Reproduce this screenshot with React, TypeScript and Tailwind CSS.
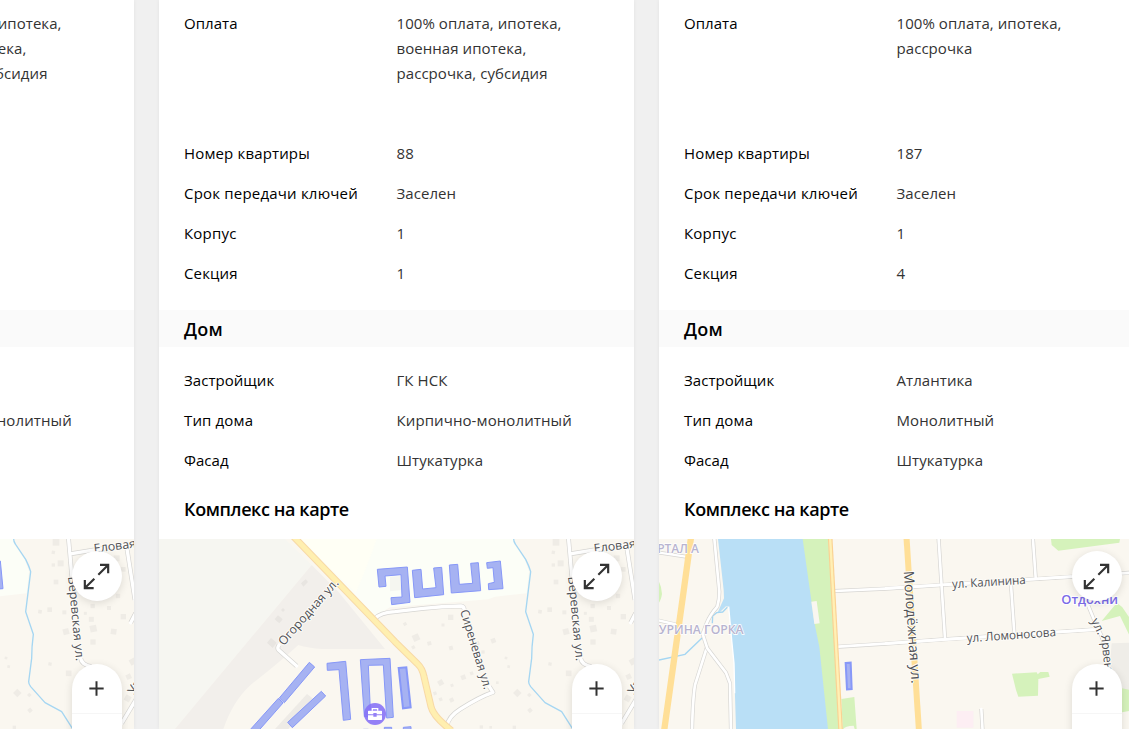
import type { ReactNode } from "react";

type Row = { label: string; value: string; labelClass?: string; valueClass?: string };

function Road({ d, w = 10 }: { d: string; w?: number }) {
  return (
    <g fill="none" strokeLinejoin="round">
      <path d={d} stroke="#d6d5d2" strokeWidth={w + 4} />
      <path d={d} stroke="#fff" strokeWidth={w} strokeLinecap="round" />
    </g>
  );
}

function Street({
  x,
  y,
  angle,
  length,
  children,
  size = 36.5,
}: {
  x: number;
  y: number;
  angle: number;
  length: number;
  children: string;
  size?: number;
}) {
  return (
    <text
      transform={`translate(${x} ${y}) rotate(${angle})`}
      textLength={length}
      lengthAdjust="spacingAndGlyphs"
      fontSize={size}
      fontWeight="500"
      fill="#505156"
      stroke="#fdfcf8"
      strokeWidth="6"
      strokeLinejoin="round"
      paintOrder="stroke"
    >
      {children}
    </text>
  );
}

const houses: [number, number, number, number][] = [
  [78, 323, 20, -25], [45, 282, 10, -30], [70, 352, 10, -30], [118, 340, 12, -15], [182, 262, 16, 0],
  [159, 285, 9, 0], [183, 354, 12, -15], [262, 340, 12, -15], [310, 332, 14, -20], [279, 366, 10, 0],
  [348, 384, 8, 10], [356, 410, 8, 10], [480, 402, 10, 10], [220, 442, 14, -20], [152, 458, 16, -30],
  [186, 466, 9, -20], [245, 430, 10, -20], [382, 489, 18, 45], [418, 495, 10, 45], [420, 541, 12, -40],
  [322, 458, 8, 0], [152, 508, 10, -20], [185, 510, 12, -25], [135, 490, 10, -20], [373, 592, 10, 0],
  [274, 591, 10, 0], [302, 592, 8, 0], [498, 37, 20, 0], [490, 67, 10, 10], [490, 105, 10, 0],
  [512, 100, 18, 0], [498, 156, 14, 0], [450, 245, 11, 10], [479, 239, 14, 0], [523, 247, 12, 0],
  [528, 305, 18, -15], [536, 430, 17, 0], [608, 228, 13, 0], [657, 234, 12, 0], [684, 198, 13, 0],
  [700, 260, 16, 0], [604, 268, 15, 0], [610, 296, 20, -12], [609, 336, 16, 0], [671, 305, 17, 8],
  [716, 440, 15, -25], [728, 395, 18, -30], [713, 505, 18, 30], [586, 250, 9, 0], [700, 118, 14, 0],
  [595, 90, 24, 0], [680, 85, 18, 0],
];

function GardenMap() {
  return (
    <svg className="block h-full w-full font-['Open_Sans',sans-serif]" viewBox="0 0 1425 570" preserveAspectRatio="xMinYMin slice">
      <rect width="1425" height="570" fill="#faf7f0" />
      <g transform="translate(-12 -27)">
        <path d="M12 27H390L470 105L60 597H12Z" fill="#f6f6f1" />
        <path d="M470 105L550 185L690 357H500Q460 354 430 345Q370 400 290 462Q235 510 205 597H60Z" fill="#f2efeb" />
        <path d="M435 27H1075L1079 45L1110 90L1122 125L1115 190L1020 200L1000 208L930 214L705 232L660 258Z" fill="#fcfef7" />
        <path d="M435 27H665Q640 100 602 190Z" fill="#fffff5" />
        <g fill="#e8e5e1">
          <path d="M438 160l14-12 7 8-14 14zM359 268l10-12 14 12-10 12zM378 240l6-6 6 6-6 6zM336 338l12-14 17 14-12 16z" />
          <path d="M360 597L456 492L476 508L400 597Z" opacity=".7" />
        </g>
      </g>
      <g transform="translate(693 -27)" fill="#efece6">
        {houses.map(([x, y, s, a], i) => (
          <rect key={i} x={x - s / 2} y={y - s / 2} width={s} height={s} transform={`rotate(${a} ${x} ${y})`} />
        ))}
        <path d="M0 140L30 138L34 180L0 184Z" fill="#f5f6f0" />
      </g>
      <g transform="translate(-12 -27)">
        <Road d="M425 408L370 359Q366 354 372 345" />
        <Road d="M660 266Q675 248 720 245L805 235Q860 229 918 228Q927 229 928 240" />
      </g>
      <g transform="translate(693 -27)">
        <Road d="M298 470L309 487Q270 500 210 538Q175 560 170 590" />
        <Road d="M535 20L547 155" />
        <Road d="M545 71L735 40" />
        <Road d="M710 50L735 210" />
        <Road d="M750 225L722 278" />
        <Road d="M572 385Q575 405 605 410" />
        <Road d="M695 580L740 505" />
        <path
          d="M371 27Q371 35 376 42L407 88Q418 110 422 125L407 245L430 313Q425 350 425 385L416 455Q416 462 422 470L465 518L515 545L552 603"
          fill="none"
          stroke="#a5d6f2"
          strokeWidth="4"
          strokeLinejoin="round"
        />
      </g>
      <g transform="translate(-12 -27)" fill="none" strokeLinejoin="round">
        <path d="M414 18L720 335L788 402Q802 415 807 440L828 530Q835 560 890 602" stroke="#f8d9a6" strokeWidth="21" />
        <path d="M414 18L720 335L788 402Q802 415 807 440L828 530Q835 560 890 602" stroke="#ffefb0" strokeWidth="15" />
      </g>
      <g transform="translate(-12 -27)" fill="#a6b2f2" stroke="#8798f8" strokeWidth="3">
        <path d="M667 118L757 111L765 217L710 224L708 203L741 201L738 134L690 138L693 169L672 171Z" />
        <path d="M463 397L479 411L388 518L373 504Z" />
        <path d="M370 505L384 519L310 603H282Z" />
        <path d="M499 484L512 498L412 593L398 577Z" />
        <path d="M516 400L572 394L587 568L565 571L552 419L517 421Z" />
        <path d="M616 389L705 385L715 562L695 564L685 405L640 406L647 560L628 560Z" />
        <path d="M688 592H710V603H688ZM745 592L768 590V603H745ZM625 598H640V603H625Z" />
      </g>
      <g transform="translate(693 -27)" fill="#a6b2f2" stroke="#8798f8" strokeWidth="3">
        <path d="M67 121L93 118L98 177L138 173L131 114L155 112L161 194L74 203Z" />
        <path d="M178 105L203 103L208 163L248 160L242 100L265 98L272 182L184 189Z" />
        <path d="M290 98L331 93L339 176L296 179L295 161L313 157L309 113L292 115Z" />
        <path d="M26 414L49 412L62 532L39 535Z" strokeWidth="6" />
      </g>
      <g transform="translate(-12 -27)">
        <circle cx="660" cy="552" r="33" fill="#8570f6" fillOpacity=".88" />
        <path d="M641 542h38q2 0 2 2v9h-16v-4h-10v4h-16v-9q0-2 2-2zM639 556h16v4h10v-4h16v12q0 2-2 2h-38q-2 0-2-2z" fill="#fff" />
        <path d="M652 542v-6h16v6" fill="none" stroke="#fff" strokeWidth="4" />
        <Street x={386} y={349} angle={-48.5} length={252}>Огородная ул.</Street>
      </g>
      <g transform="translate(693 -27)">
        <Street x={210} y={243} angle={73} length={248}>Сиреневая ул.</Street>
        <Street x={534} y={140} angle={84.500} length={255}>Веревская ул.</Street>
        <Street x={613} y={68} angle={-7} length={127}>Еловая</Street>
        <Street x={733} y={496} angle={-60} length={105}>Узкая</Street>
      </g>
    </svg>
  );
}

function RiverMap() {
  return (
    <svg className="block h-full w-full font-['Open_Sans',sans-serif]" viewBox="0 0 1425 570" preserveAspectRatio="xMinYMin slice">
      <rect width="1425" height="570" fill="#faf7f0" />
      <g transform="translate(-27 -27)">
        <path d="M204 27H470L540 597H258L252 400L245 330L236 230L228 229L213 243L202 250L222 205L221 180Z" fill="#b9dff6" />
        <path d="M236 230L245 330L252 400L254 490" fill="none" stroke="#fff" strokeWidth="4" />
        <path d="M458 27H535L572 597H534L508 350L494 282Z" fill="#d5f2bb" />
        <path d="M484 215L500 213L509 280L493 282Z" fill="#f9f6f0" />
        <path d="M574 507L613 501L620 597H578ZM27 155Q35 170 36 192Q33 210 27 218Z" fill="#d5f2bb" />
        <path d="M580 597Q585 588 611 587L614 597Z" fill="#faf7f0" />
        <path d="M27 390L105 373L160 320M187 280L188 258L200 248L218 246L232 232" fill="none" stroke="#a5d6f2" strokeWidth="4" />
        <Road d="M27 68L107 80" w={7} />
        <Road d="M20 270L85 285" w={7} />
        <path d="M124 15L100 190L42 605" fill="none" stroke="#ffdf97" strokeWidth="19" />
        <Road d="M172 348L135 465Q128 510 126 605" w={8} />
        <Road d="M192 15L208 185Q208 210 202 230Q180 255 170 280L158 312L172 355L228 428L240 460L243 605" w={8} />
        <Road d="M555 183L705 176L1265 140L1445 128" w={8} />
        <Road d="M565 350L705 341L885 328L1345 298" w={8} />
        <path d="M540 15L572 605" fill="none" stroke="#fad293" strokeWidth="14" />
        <path d="M540 15L572 605" fill="none" stroke="#fff0b5" strokeWidth="7" />
        <path d="M587 399L602 398L605 477L591 478Z" fill="#a6b2f2" stroke="#8798f8" strokeWidth="6" />
      </g>
      <g transform="translate(678 -27)">
        <path d="M498 27H705L703 38L520 62L500 45Z" fill="#d5f2bb" />
        <path d="M381 431L455 427L458 433L466 426L490 426L494 440L460 447L459 497L400 500L393 480Z" fill="#d5f2bb" />
        <path d="M680 340L735 338V485H700L675 400Z" fill="#efede8" />
        <path d="M650 273L690 225L680 205L712 232L735 265V320L705 258ZM711 475L735 480V542L711 547Z" fill="#d5f2bb" />
        <path d="M215 543H265V593H215Z" fill="#fdeef3" />
        <Road d="M160 15L180 326" w={8} />
        <Road d="M443 15L452 143" w={8} />
        <Road d="M378 165L388 310" w={8} />
        <Road d="M289 537L293 605" w={8} />
        <Road d="M605 215L640 300Q660 325 665 420" w={8} />
        <path d="M0 175L560 140M0 341L180 328L625 299" fill="none" stroke="#fff" strokeWidth="8" />
        <path d="M64 15L102 605" fill="none" stroke="#ffdf97" strokeWidth="18" />
        <Street x={56} y={124} angle={86} length={338} size={42}>Молодёжная ул.</Street>
        <Street x={202} y={175} angle={-3.5} length={221}>ул. Калинина</Street>
        <Street x={246} y={337} angle={-4} length={268}>ул. Ломоносова</Street>
        <Street x={617} y={272} angle={63} length={50}>ул.</Street>
        <Street x={648} y={316} angle={84} length={180}>Ярвенская</Street>
        <text x="529" y="222" textLength="170" lengthAdjust="spacingAndGlyphs" fontSize="38" fontWeight="600" fill="#7b6be8" stroke="#fff" strokeWidth="6" paintOrder="stroke">
          Отдохни
        </text>
      </g>
      <g transform="translate(-27 -27)" fontSize="36" fontWeight="600" fill="#b8b4cf" stroke="#fff" strokeWidth="4" paintOrder="stroke">
        <text x="147" y="68" textAnchor="end">КВАРТАЛ А</text>
        <text x="281" y="312" textAnchor="end" textLength="279" lengthAdjust="spacingAndGlyphs">АУРИНА ГОРКА</text>
      </g>
    </svg>
  );
}

function MapPanel({ children }: { children: ReactNode }) {
  return (
    <div className="relative h-[190px] overflow-hidden">
      {children}
      <button aria-label="Развернуть карту" className="absolute top-3 right-3 size-[50px] rounded-full bg-white shadow-[0_2px_8px_rgba(0,0,0,0.12)]">
        <svg viewBox="0 0 150 150" className="size-full" fill="none" stroke="#333" strokeWidth="6.5">
          <path d="M79 71L109 41M84 41.5H108.500V67M67 83L38 112M38.500 87V111.500H65" />
        </svg>
      </button>
      <div className="absolute top-[125px] right-3 h-[100px] w-[50px] overflow-hidden rounded-[25px] bg-white shadow-[0_2px_8px_rgba(0,0,0,0.12)]">
        <button aria-label="Приблизить" className="block h-[50px] w-full border-b border-[#f6f6f6]">
          <svg viewBox="0 0 150 150" className="size-[50px]" fill="none" stroke="#333" strokeWidth="6">
            <path d="M52 73.500H95M73.500 52V95" />
          </svg>
        </button>
      </div>
    </div>
  );
}

function Rows({ rows }: { rows: Row[] }) {
  return (
    <dl className="flex flex-col gap-[15px] px-[25px] text-[15px] leading-[25px]">
      {rows.map((r) => (
        <div key={r.label} className={r.label === "Оплата" ? "flex h-[115px]" : "flex h-[25px]"}>
          <dt className={`w-[212.500px] shrink-0 text-black ${r.labelClass ?? "tracking-[0.04px]"}`}>{r.label}</dt>
          <dd className={`w-[190px] whitespace-pre-line text-[#333] ${r.valueClass ?? "tracking-[0.06px]"}`}>{r.value}</dd>
        </div>
      ))}
    </dl>
  );
}

function Card({ flat, house, map }: { flat: Row[]; house: Row[]; map: ReactNode }) {
  return (
    <article className="w-[475px] shrink-0 bg-white pt-[11px] shadow-[0_0_4px_rgba(0,0,0,0.06)]">
      <Rows rows={flat} />
      <h2 className="mt-6 mb-[21px] h-[37px] bg-[#fafafa] px-[25px] text-[18px] leading-[38px] font-semibold tracking-[0.3px] text-black">Дом</h2>
      <Rows rows={house} />
      <h2 className="mt-[17px] h-[49px] px-[25px] text-[18px] leading-[39px] font-semibold tracking-[-0.4px] text-black">
        Комплекс на карте
      </h2>
      {map}
    </article>
  );
}

function flatRows(payment: string, num: string, section: string): Row[] {
  return [
    { label: "Оплата", value: payment },
    { label: "Номер квартиры", value: num, labelClass: "tracking-[0.15px]" },
    { label: "Срок передачи ключей", value: "Заселен", labelClass: "tracking-[0.2px]" },
    { label: "Корпус", value: "1", labelClass: "tracking-[0.2px]" },
    { label: "Секция", value: section, labelClass: "tracking-[0.15px]" },
  ];
}

function houseRows(developer: string, type: string): Row[] {
  return [
    { label: "Застройщик", value: developer },
    { label: "Тип дома", value: type, labelClass: "tracking-[0.15px]", valueClass: "tracking-[0.1px]" },
    { label: "Фасад", value: "Штукатурка" },
  ];
}

const nskFlat = flatRows("100% оплата, ипотека,\nвоенная ипотека,\nрассрочка, субсидия", "88", "1");
const nskHouse = houseRows("ГК НСК", "Кирпично-монолитный");

export default function App() {
  return (
    <main className="h-[729px] w-full overflow-hidden bg-[#f0f0f0] font-['Open_Sans','Noto_Sans',sans-serif]">
      <div className="-ml-[341px] flex w-[1475px] gap-[25px]">
        <Card flat={nskFlat} house={nskHouse} map={<MapPanel><GardenMap /></MapPanel>} />
        <Card flat={nskFlat} house={nskHouse} map={<MapPanel><GardenMap /></MapPanel>} />
        <Card
          flat={flatRows("100% оплата, ипотека,\nрассрочка", "187", "4")}
          house={houseRows("Атлантика", "Монолитный")}
          map={<MapPanel><RiverMap /></MapPanel>}
        />
      </div>
    </main>
  );
}
